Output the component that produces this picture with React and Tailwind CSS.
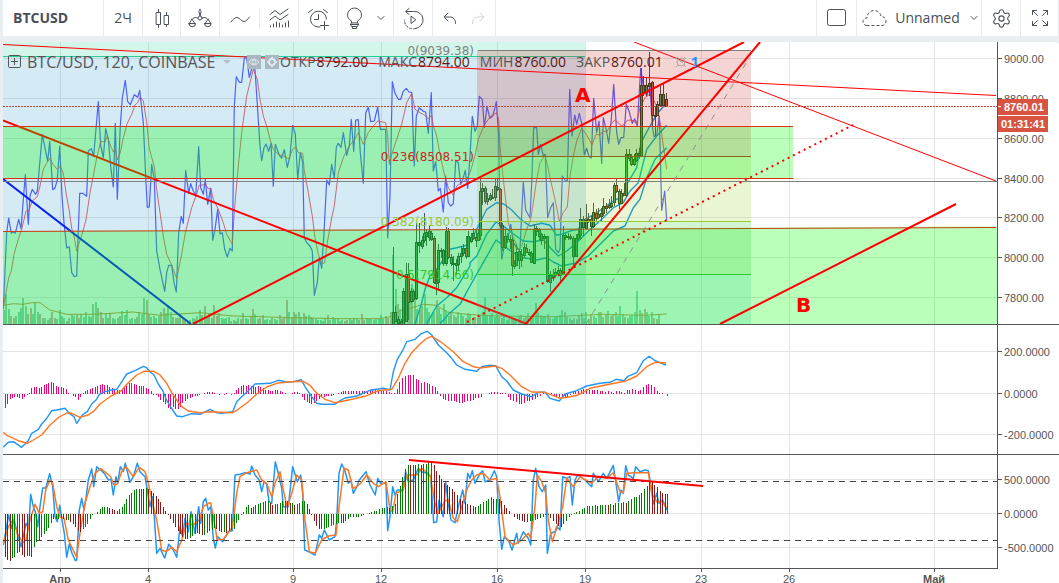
import React from 'react';
import { ChevronDown, Settings } from 'lucide-react';

// Series are stored in thirds of a pixel, split in segments: [x offset, points]
const OSC = [
  [0, '10,820 20,590 26,546 34,592 38,588 46,592 56,550 63,578 76,416 85,565 90,480 97,460 107,475 112,465 127,295 143,376 149,316 158,461 165,456 172,432 179,330 186,480 192,560 200,636 208,632 215,710 223,722 230,720 239,472 248,472 260,481 265,345 274,338 281,360 295,197 302,330 310,365 317,278 325,310 333,400 340,453 346,262 352,490 361,270 367,186 376,133 383,197 391,206 403,176 413,184 419,163 430,260 437,420 442,514 448,513 455,385 463,430 470,645 480,700 494,766 500,710 506,688 515,688 522,740 529,768 536,590 544,541 550,562 557,403 566,472 572,443 580,465 587,480 596,332 602,455 610,475 616,430 623,505 632,457 638,613 645,580 653,520 660,594 667,590 674,640 682,663 690,637 697,645 703,210 709,122 718,139 725,139 733,66 740,66 748,124 760,82 765,100 780,330'],
  [720, '65,374 72,335 78,324 86,346 93,322 100,451 106,325 118,358 125,366 133,341 142,394 150,360 158,268 166,294 173,430 181,350 188,380 193,605 200,620 210,630 217,645 223,778 232,740 238,665 245,697 252,590 260,432 268,447 275,385 283,428 289,334 295,322 303,334 310,290 320,358 328,330 334,250 341,346 347,252 355,251 361,350 370,442 377,231 385,214 392,257 403,255 413,213 421,280 437,280 443,606 450,480 457,137 465,172 475,190 482,190 490,166 499,157 507,168 515,169 523,390 529,240 538,215 550,226 557,228 565,292 574,170 580,405 587,376 595,465 601,457 610,528 617,420 625,500 632,510 640,503 647,374 655,380 662,445 670,425 676,403 683,457 690,360 697,241 705,286 712,270'],
  [1410, '28,181 37,190 43,274 51,212 60,247 68,240 75,215 79,197 86,300 90,560 95,670 105,620 115,600 122,565 130,620 143,640 150,640 160,437 167,523 180,545 185,440 191,275 200,275 205,355 212,325 220,360 226,355 233,545 242,515 250,500 257,640 265,650 270,640 277,420 285,432 292,435 299,160 306,300 314,237 320,265 328,232 335,262 343,357 350,337 357,362 364,366 371,187 380,290 387,255 395,382 400,245 408,278 416,322 424,250 431,145 440,290 446,325 453,305 461,304 469,205 477,225 487,262 494,248 502,270 512,97 520,150 530,180 540,150 547,270 552,302 560,298 568,240 575,523 584,465 590,552'],
];

const OSC_SIGNAL = [
  [0, '10,815 18,770 26,725 34,705 42,655 55,610 65,580 78,525 86,525 97,495 112,482 120,450 130,400 143,376 150,366 158,385 172,400 181,389 190,412 198,470 208,525 215,577 222,600 230,645 236,625 245,598 258,552 270,470 280,420 290,365 302,316 315,318 322,300 332,330 340,348 346,338 352,372 361,350 370,305 382,262 395,235 405,207 413,200 421,182 430,195 440,260 448,338 463,392 470,460 480,530 490,600 500,655 515,688 530,728 543,665 557,585 565,555 575,515 590,474 598,447 608,447 616,443 625,459 632,456 640,490 655,520 670,560 680,595 697,625 703,525 715,390 725,290 740,180 755,120'],
  [720, '40,100 52,130 60,190 70,240 80,270 90,310 100,340 115,355 130,360 146,368 158,340 168,333 175,350 188,352 193,405 205,470 217,540 225,605 235,655 245,683 254,680 262,620 275,545 283,510 295,410 312,360 328,330 343,312 355,290 362,305 370,325 385,290 400,270 413,255 437,260 443,300 448,385 457,350 470,310 485,265 500,200 515,172 525,220 540,230 552,236 565,248 575,238 580,270 590,300 600,355 612,410 625,455 640,478 650,450 665,440 680,430 690,410 705,360 715,310 733,267 750,243'],
  [1410, '80,230 86,250 90,330 100,430 115,560 128,600 145,640 155,630 170,580 182,550 190,500 200,430 210,380 225,358 232,385 240,425 255,490 268,555 280,530 292,513 300,420 310,360 320,315 335,277 350,297 360,315 366,326 378,295 390,297 400,285 410,288 425,262 435,251 455,270 462,265 472,253 485,252 500,262 510,215 525,185 535,178 545,180 550,190 562,215 572,270 580,330 585,365 590,400'],
];

const VOLUME_MA = [
  [0, '10,808 40,803 70,805 95,800 120,800 150,822 200,835 280,835 400,828 480,838 600,830 700,840 780,842'],
  [720, '150,845 300,848 420,848 450,842 480,825 550,805 590,808 620,828 680,835'],
  [1410, '80,840 250,842 400,835 520,838 590,834'],
];

const MA_FAST = [
  [720, '525,863 545,800 555,760 570,720 590,700 610,670 630,640 650,635 680,628 700,600 715,570'],
  [1410, '50,520 80,500 100,503 125,522 150,548 180,570 215,562 240,568 260,598 275,595 300,585 325,580 345,550 380,530 430,495 460,480 470,445 500,395 513,320 540,270 560,235 590,200'],
];
const MA_MID = [
  [720, '560,863 590,810 620,785 650,755 690,690'],
  [1410, '0,680 20,660 50,595 78,558 100,570 125,590 160,615 190,617 220,612 245,640 265,660 290,645 320,620 350,590 400,545 430,515 460,500 480,465 505,440 530,340 560,300 590,268'],
];
const MA_SLOW = [
  [720, '600,863 630,830 660,805'],
  [1410, '0,750 40,680 78,612 95,625 130,650 160,665 200,672 230,665 250,678 275,690 320,680 355,660 400,615 430,585 465,570 490,515 510,490 530,425 555,370 590,335'],
];

const MACD = [
  [0, '10,382 25,367 40,365 65,382 85,362 95,340 115,328 125,312 140,295 155,272 170,270 195,265 210,282 222,290 230,310 248,284 262,275 275,252 288,240 298,223 315,215 330,211 350,208 362,190 380,162 405,152 430,139 440,143 450,155 462,165 475,192 490,215 497,235 510,258 530,288 548,290 575,281 600,283 630,268 650,278 665,280 698,275 710,245 725,230 745,212 765,192 810,190 835,181 860,186 880,185 904,179 915,200 935,230 950,250 965,253 1005,253'],
  [1020, '0,242 15,234 50,228 90,211 130,205 150,210 160,155 172,118 190,88 200,65 225,58 245,40 262,34 275,45 295,75 320,98 335,115 350,135 375,148 410,154 425,140 450,136 467,137 485,170 500,183 520,210 545,222 575,230 595,217 615,217 630,235 658,243 675,222 710,212 740,198 780,190 810,187 828,178 852,182 862,170 890,158 910,122 928,109 945,122 978,135'],
];
const MACD_SIGNAL = [
  [0, '10,337 22,347 60,364 82,370 100,360 125,345 150,315 175,293 200,279 215,280 240,292 262,286 280,275 300,252 330,230 365,211 385,188 410,165 432,154 462,154 480,165 500,190 515,218 530,240 545,260 565,273 600,278 630,275 698,278 715,268 745,245 770,222 800,201 830,190 870,185 910,184 930,196 950,220 975,238 1005,248'],
  [1020, '0,245 40,237 80,227 115,212 155,208 175,175 195,130 215,98 240,72 260,55 275,49 300,64 340,95 370,125 400,140 420,144 465,138 485,145 510,165 545,200 575,216 615,217 660,235 690,230 715,225 750,205 800,194 855,184 890,168 920,140 945,127 978,129'],
];

const STOCH = [
  [0, '10,675 26,585 35,625 42,598 52,640 63,680 70,650 78,610 86,625 92,523 100,560 106,575 113,620 120,560 128,504 137,504 149,461 158,500 165,590 172,605 179,556 186,600 193,640 200,712 208,672 216,700 226,722 230,720 238,570 245,535 252,570 258,535 265,480 275,447 281,500 290,440 305,453 315,463 325,480 333,478 340,525 348,470 353,490 361,440 370,455 376,430 390,487 400,470 412,430 420,455 435,470 442,510 450,560 457,530 463,590 470,700 480,685 494,714 506,673 520,690 530,712 540,620 548,650 555,595 565,635 573,575 585,640 596,560 602,610 610,545 617,535 625,570 632,560 640,655 646,684 653,650 668,665 685,635 697,632 705,465 720,463 735,458 750,462 755,438 765,465 778,480 785,515 792,485 800,493 807,545 815,550 826,425 835,460 845,505 850,560 865,560 878,440 892,485 902,465 908,520 914,690 930,697 945,705 958,645 965,655 973,630 988,660 1005,650 1010,600 1017,460'],
  [1020, '5,432 14,450 25,490 33,480 40,520 50,500 58,480 78,455 90,495 106,525 113,475 122,490 138,490 143,632 150,590 158,500 165,525 172,510 188,510 197,455 205,485 220,480 235,445 245,455 260,460 272,470 281,608 290,605 297,540 310,590 317,487 325,550 333,600 345,608 355,560 368,510 375,550 383,460 390,475 397,452 405,490 420,460 428,452 435,485 450,480 463,452 470,470 477,600 485,688 493,650 507,665 516,690 530,640 535,670 550,635 565,655 572,675 580,480 587,445 597,500 607,515 617,495 622,700 632,640 645,635 650,620 660,630 668,470 680,475 690,470 697,555 705,480 713,465 735,480 755,500 760,460 775,485 790,460 800,475 820,436 828,490 836,545 843,510 850,520 857,437 865,465 880,475 887,440 900,455 915,450 925,452 932,490 940,552 950,520 957,550 968,540 980,570'],
];
const STOCH_SIGNAL = [
  [0, '10,672 25,620 40,598 52,640 68,668 78,660 90,600 105,553 118,580 128,575 137,510 150,480 158,490 170,560 180,590 192,595 205,660 230,712 240,640 255,550 270,500 285,460 302,446 320,460 332,470 342,495 352,492 365,455 378,440 400,470 418,442 435,455 445,490 458,550 470,600 485,690 498,695 515,682 530,695 545,660 560,610 580,615 598,600 610,560 625,550 632,548 640,590 652,660 670,658 697,622 710,520 720,470 740,458 770,450 785,480 800,490 815,530 825,490 840,455 852,520 862,562 875,520 890,465 905,480 915,600 928,695 945,700 965,660 985,648 1008,645 1018,555'],
  [1020, '12,445 25,450 38,505 50,500 62,490 80,465 100,490 115,500 138,485 150,570 158,575 168,520 190,510 200,465 230,465 245,445 270,465 285,550 295,580 315,542 325,540 340,595 352,605 365,560 380,510 395,480 410,465 430,460 450,480 470,475 480,530 495,650 520,675 545,660 565,640 572,655 585,560 592,465 605,485 617,520 625,600 637,665 655,610 668,560 680,475 700,500 720,470 755,490 775,470 800,475 820,458 840,515 850,518 860,460 885,458 925,458 935,520 950,545 968,545 980,565'],
];

const VOLUME = [14,30,15,8,6,8,12,16,26,18,10,16,10,22,12,10,6,6,4,6,12,6,5,14,8,6,3,6,9,8,10,6,10,7,12,8,7,20,22,16,12,6,10,6,11,6,5,6,8,13,9,14,5,6,5,7,12,10,26,24,10,7,8,6,8,12,16,11,19,12,7,6,6,10,6,5,3,4,6,5,8,14,9,18,7,10,6,19,8,11,6,5,6,7,3,4,3,6,5,11,6,5,7,15,10,5,6,9,4,5,4,6,5,4,9,5,6,24,12,6,12,10,12,7,11,8,9,7,6,5,4,4,3,6,9,4,7,5,6,3,4,3,4,6,4,6,5,4,10,4,6,5,6,4,5,6,9,5,8,6,12,69,35,20,15,18,26,22,30,40,25,15,14,18,30,16,12,10,12,24,16,10,20,14,8,12,9,7,12,10,8,6,11,9,6,7,6,9,12,27,8,9,11,7,10,7,6,8,4,5,7,4,6,8,9,6,8,11,5,8,21,12,9,7,8,10,6,5,7,8,9,14,12,7,6,4,6,5,8,11,6,12,5,10,8,6,12,12,7,9,13,8,9,12,8,18,10,7,6,8,9,12,33,14,11,15,12,8,12,6,5,10];

// [x, open, close, high, low]
const CANDLES = [
  [1178,863,828,632,863],[1186,828,855,810,858],[1194,863,850,840,863],[1202,855,863,850,863],[1210,863,765,755,863],[1217,855,715,680,858],[1224,713,797,680,850],[1232,766,797,755,800],[1240,790,766,760,800],[1249,788,619,560,792],[1257,619,627,560,650],[1265,629,612,600,640],[1272,612,592,530,620],[1279,600,588,580,630],[1286,586,605,570,615],[1294,590,608,585,615],[1301,605,738,600,745],[1308,735,740,700,778],[1315,740,643,625,765],[1323,643,645,635,665],[1330,643,683,640,690],[1337,683,586,572,690],[1345,586,665,575,668],[1353,662,680,655,690],[1360,682,686,660,735],[1368,685,680,668,715],[1375,684,660,650,700],[1383,662,652,630,680],[1390,652,637,625,660],[1398,637,660,600,670],[1405,660,600,585,662],[1413,602,614,590,620],[1420,605,590,575,612],[1428,602,612,578,632],[1435,612,590,580,615],[1439,598,465,430,612],
  [1447,465,457,440,505],[1454,457,497,450,505],[1461,495,485,470,505],[1469,490,478,470,495],[1476,483,485,460,490],[1484,484,450,430,495],[1491,453,460,428,465],[1499,460,568,455,575],[1507,568,634,560,645],[1514,634,600,580,640],[1522,600,610,590,620],[1529,608,613,598,640],[1535,612,688,605,718],[1542,690,680,672,700],[1549,686,647,625,690],[1557,645,672,640,700],[1564,672,655,640,695],[1572,655,632,620,665],[1579,635,648,625,650],[1587,648,655,640,660],[1594,652,680,645,682],[1601,680,578,565,682],[1609,577,585,570,600],[1617,580,600,575,610],[1624,595,612,590,625],[1632,605,600,595,640],[1642,601,736,600,740],[1650,738,716,705,768],[1658,722,714,700,735],[1666,718,708,695,725],[1674,714,703,690,720],[1681,703,718,695,735],[1688,715,597,570,718],[1695,597,603,590,610],[1703,604,600,590,610],[1710,600,607,593,612],[1719,606,661,600,690],[1727,661,606,595,665],[1734,607,595,580,612],[1741,597,550,515,610],[1749,550,574,540,600],[1757,575,552,505,580],[1765,549,556,530,560],[1772,550,570,540,600],[1780,570,528,500,575],[1788,530,545,520,555],[1795,545,535,515,548],[1803,540,530,515,556],[1810,532,511,485,540],[1818,510,516,500,530],[1826,514,508,490,520],[1834,510,500,480,515],[1842,500,448,440,510],[1848,448,465,428,470],[1856,465,500,460,520],[1864,500,470,460,505],[1871,470,475,440,480],[1878,476,354,340,485],[1886,354,365,340,375],[1894,362,382,355,392],[1901,384,370,355,390],[1909,372,352,340,378],[1916,352,358,335,368],[1923,360,148,97,363],[1930,148,170,120,180],[1938,170,148,125,180],[1948,148,140,47,180],[1957,138,238,135,270],[1964,236,240,210,300],[1972,238,205,195,240],[1981,208,175,150,210],[1989,175,207,145,212],[1997,190,210,170,213],
];

const MACD_BARS = [
  [14, 1022, [-43,-30,-15,-12,-10,-10,-12,-16,-10,-2,3,17,20,20,17,22,28,31,33,35,32,25,20,20,18,14,4,-1,-5,-10,-18,-8,3,8,11,14,17,21,25,26,29,28,26,22,18,16,13,12,16,22,28,32,32,30,27,25,23,23,18,14,8,-2,-4,-10,-18,-24,-30,-42,-46,-40,-46,-46,-40,-28,-22,-14,-12,-8,-6,-5,-3,-1,3,5,6,7,3,1,-2,1,-3,2,-1,-2,2,12,18,24,26,24,28,24,26,20,25,22,18,13,12,10,8,12,12,10,6,4,-1,0,4,5,5,2,-10,-18,-24,-28,-30,-26,-20,-14,-10,-9,-7,-5,-6,-3,1,4,6]],
  [1028, 2002, [8,8,8,8,8,8,8,8,8,9,9,11,12,11,9,10,8,5,2,2,16,35,47,55,58,58,57,46,42,34,35,32,30,24,20,8,-5,-16,-18,-20,-22,-22,-25,-28,-26,-25,-22,-20,-18,-13,-12,-8,0,0,4,6,5,5,2,2,2,-8,-18,-20,-25,-30,-30,-28,-22,-22,-18,-15,-10,-6,3,3,3,3,-5,-8,-10,-12,-10,-10,-4,6,8,10,12,14,14,12,12,12,12,9,8,7,8,6,4,8,8,5,2,12,13,15,13,10,12,22,26,29,27,20,8,4,2,-1,-6]],
];
const STOCH_BARS = [
  [14, 1022, [-128,-138,-140,-132,-128,-116,-115,-122,-128,-126,-126,-128,-98,-85,-80,-70,-60,-52,-42,-28,-16,-14,-14,-12,-14,-18,-18,-24,-30,-38,-50,-54,-46,-38,-30,-16,-4,0,6,14,20,20,22,18,14,12,10,14,20,30,44,56,62,72,74,74,76,74,77,75,70,62,54,46,36,20,8,-4,-14,-28,-40,-50,-60,-70,-74,-76,-72,-66,-60,-58,-60,-62,-62,-58,-52,-48,-42,-46,-52,-54,-54,-56,-50,-48,-46,-26,-18,-4,6,20,26,18,22,26,30,32,36,38,38,34,28,30,30,34,38,38,38,32,32,28,30,32,38,38,30,14,-4,-20,-36,-46,-46,-46,-42,-38,-36,-32,-30,-28,-26]],
  [1028, 2002, [-26,-22,-16,-10,-8,-8,-8,-6,-3,-1,2,5,8,10,14,18,18,20,18,24,30,60,85,110,136,148,146,148,146,150,148,150,150,155,155,146,130,118,104,94,88,82,74,66,56,46,40,36,30,26,24,22,24,30,36,40,46,50,46,46,44,38,28,18,8,0,-8,-14,-18,-22,-24,-24,-22,-20,-18,-14,-12,-10,-4,-2,-12,-22,-30,-36,-40,-30,-20,-10,-4,2,6,10,14,18,24,24,24,26,24,26,26,28,26,30,28,32,34,34,36,34,40,44,50,52,58,62,76,84,100,96,88,80,70,62,60,60]],
];

const DAYS = [
  { x: 57, label: 'Апр', bold: true },
  { x: 145, label: '4' },
  { x: 290, label: '9' },
  { x: 378, label: '12' },
  { x: 494, label: '16' },
  { x: 582, label: '19' },
  { x: 698, label: '23' },
  { x: 786, label: '26' },
  { x: 931, label: 'Май', bold: true },
];

const FIB = [
  { y: 8, next: 114, line: '#808080', fill: '#cc2828', label: '0(9039.38)' },
  { y: 114, next: 179, line: '#cc2828', fill: '#95cc28', label: '0.236(8508.51)' },
  { y: 179, next: 232, line: '#95cc28', fill: '#28cc28', label: '0.382(8180.09)' },
  { y: 232, next: 282, line: '#28cc28', fill: '#28cc95', label: '0.5(7914.66)' },
];

function toPoints(segments, top) {
  return segments
    .flatMap(([offset, pts]) =>
      pts.split(' ').map((p) => {
        const [x, y] = p.split(',').map(Number);
        return `${((x + offset) / 3 - 3).toFixed(1)},${(y / 3 - top).toFixed(1)}`;
      })
    )
    .join(' ');
}

function Line({ data, top, ...props }) {
  return <polyline points={toPoints(data, top)} fill="none" strokeLinejoin="round" {...props} />;
}

function Grid({ rows }) {
  return (
    <g stroke="#e4e4e4" shapeRendering="crispEdges">
      {DAYS.map((d) => <line key={d.x} x1={d.x + 0.5} x2={d.x + 0.5} y1="0" y2="100%" />)}
      {rows.map((y) => <line key={y} x1="0" x2="100%" y1={y + 0.5} y2={y + 0.5} />)}
    </g>
  );
}

function Bars({ groups, zero, color }) {
  return (
    <g shapeRendering="crispEdges">
      {groups.map(([from, to, values]) =>
        values.map((v, i) => {
          const x = Math.round((from + ((to - from) * i) / (values.length - 1)) / 3 - 3);
          const h = Math.round(Math.abs(v) / 3);
          return <rect key={`${from}-${i}`} x={x} y={v > 0 ? zero - h : zero} width="1" height={h} fill={color(v, values[i - 1])} />;
        })
      )}
    </g>
  );
}

function Axis({ labels, children }) {
  return (
    <div className="w-[62px] shrink-0 border-l border-[#555555]">
      <svg className="block h-full w-full font-['Liberation_Sans',sans-serif] text-[11px]" fill="#555555">
        {labels.map(([y, text]) => (
          <g key={text}>
            <line x1="0" x2="4" y1={y + 0.5} y2={y + 0.5} stroke="#555555" />
            <text x="6" y={y + 5}>{text}</text>
          </g>
        ))}
        {children}
      </svg>
    </div>
  );
}

function PricePane() {
  return (
    <section className="relative flex h-[283px] border-b border-[#555555]">
      <svg className="block h-full min-w-0 flex-1">
        <Grid rows={[16, 56, 96, 136, 175, 215, 255]} />

        <g shapeRendering="crispEdges" opacity="0.55">
          {VOLUME.map((v, i) => (
            <rect key={i} x={Math.round(i * 2.417)} y={282 - v} width="2" height={v} fill={(i * 7 + v * 3) % 5 < 2 ? '#b0685a' : '#3aa86c'} />
          ))}
        </g>
        <Line data={VOLUME_MA} top={6} stroke="#c98a3a" />

        <Line data={OSC} top={6} stroke="#3a3aff" strokeWidth="1.2" opacity="0.85" />
        <Line data={OSC_SIGNAL} top={6} stroke="#e8434a" opacity="0.85" />
        <g stroke="#0c90e0" strokeWidth="1.4">
          <Line data={MA_FAST} top={6} />
          <Line data={MA_MID} top={6} />
          <Line data={MA_SLOW} top={6} />
        </g>

        <g shapeRendering="crispEdges">
          {CANDLES.map(([x, o, c, h, l]) => {
            const cx = Math.round(x / 3 - 3);
            const top = Math.round(Math.min(o, c) / 3 - 6);
            const height = Math.max(1, Math.round(Math.abs(o - c) / 3));
            return (
              <g key={x}>
                <rect x={cx} y={Math.round(h / 3 - 6)} width="1" height={Math.round((l - h) / 3)} fill="#4a4a42" />
                <rect x={cx - 0.5} y={top + 0.5} width="2" height={height} fill={c < o ? '#4f9a58' : '#e8503c'} stroke="#23401f" strokeWidth="1" />
              </g>
            );
          })}
        </g>

        <line x1="0" y1="137" x2="188" y2="282" stroke="#0000ff" strokeWidth="2" />
        <rect x="0" y="0" width="582" height="14" fill="#28cc95" opacity="0.2" />
        <rect x="0" y="14" width="582" height="268" fill="#2895cc" opacity="0.2" />
        <line x1="0" y1="14.5" x2="582" y2="14.5" stroke="#28cc95" />
        <polygon points="0,189 3000,175 3000,282 0,282" fill="#00ff00" opacity="0.27" />
        <polyline points="0,189.5 993,185.5" stroke="#d03a10" fill="none" />
        <line x1="0" y1="78.5" x2="524" y2="282" stroke="#ff0000" strokeWidth="2" />

        {FIB.map((f) => (
          <g key={f.label} shapeRendering="crispEdges">
            <rect x="474" y={f.y} width="274" height={f.next - f.y} fill={f.fill} opacity="0.2" />
            <line x1="475" x2="748" y1={f.y + 0.5} y2={f.y + 0.5} stroke={f.line} />
          </g>
        ))}

        <rect x="0" y="84" width="790" height="53" fill="#00ff00" opacity="0.27" />
        <g stroke="#e03010" shapeRendering="crispEdges">
          <line x1="0" x2="790" y1="84.5" y2="84.5" />
          <line x1="0" x2="790" y1="136.5" y2="136.5" />
        </g>
        <line x1="0" x2="100%" y1="139.5" y2="139.5" stroke="#808080" />
        <line x1="0" x2="100%" y1="64.5" y2="64.5" stroke="#c84434" strokeDasharray="2 1" shapeRendering="crispEdges" />

        <line x1="583" y1="282" x2="745" y2="18" stroke="#909090" strokeDasharray="6 6" />
        <g stroke="#ff0000">
          <line x1="0" y1="2.5" x2="993" y2="53.5" />
          <line x1="631" y1="0" x2="993" y2="139" />
        </g>
        <g stroke="#ff0000" strokeWidth="2">
          <line x1="190" y1="282" x2="741" y2="0" />
          <line x1="523" y1="282" x2="757" y2="0" />
          <line x1="717" y1="282" x2="953" y2="162" />
          <line x1="464" y1="280" x2="850" y2="83" strokeDasharray="2 4" />
        </g>

        <g className="font-['DejaVu_Sans',sans-serif] text-[12px]" textAnchor="end">
          {FIB.map((f) => <text key={f.label} x="471" y={f.y + 5} fill={f.line}>{f.label}</text>)}
        </g>
        <g className="font-['DejaVu_Sans',sans-serif] text-[20px] font-bold" fill="#ff0000">
          <text x="572" y="60">A</text>
          <text x="793" y="270">B</text>
        </g>
      </svg>

      <Axis labels={[[16, '9000.00'], [56, '8800.00'], [96, '8600.00'], [136, '8400.00'], [175, '8200.00'], [215, '8000.00'], [255, '7800.00']]}>
        <g className="font-bold">
          <rect x="0" y="57" width="50" height="16" fill="#d75442" />
          <rect x="0" y="74" width="50" height="16" fill="#d75442" />
          <line x1="0" x2="3" y1="64.5" y2="64.5" stroke="#ffffff" />
          <text x="6" y="69" fill="#ffffff">8760.01</text>
          <text x="3" y="86" fill="#ffffff">01:31:41</text>
        </g>
      </Axis>

      <Legend />
    </section>
  );
}

const OHLC = [
  ['ОТКР', '8792.00'],
  ['МАКС', '8794.00'],
  ['МИН', '8760.00'],
  ['ЗАКР', '8760.01'],
];

function Legend() {
  return (
    <div className="absolute left-[5px] top-[10px] flex h-5 items-center whitespace-nowrap font-['Open_Sans',sans-serif] text-sm text-[#555555]">
      <svg className="mr-[5px] h-[14px] w-[14px]" fill="none" stroke="#555555">
        <rect x="0.5" y="0.5" width="12" height="12" rx="1" />
        <path d="M3 6.5h7M6.5 3v7" />
      </svg>
      <span className="w-[196px] text-base">BTC/USD, 120, COINBASE</span>
      <svg className="mr-4 h-1 w-2" fill="#b5bfc8"><path d="M0 0h8l-4 4z" /></svg>
      <div className="mr-px flex gap-1">
        <svg className="h-[14px] w-[14px]" fill="none" stroke="#dfe6ea">
          <rect width="14" height="14" fill="#a9b7c0" stroke="none" />
          <path d="M2 7q5-6 10 0q-5 6-10 0z" /><circle cx="7" cy="7" r="2" />
        </svg>
        <svg className="h-[14px] w-[14px]" fill="none" stroke="#dfe6ea" strokeWidth="2">
          <rect width="14" height="14" fill="#a9b7c0" stroke="none" />
          <circle cx="7" cy="7" r="3" /><path d="M7 2v2M7 10v2M2 7h2M10 7h2" />
        </svg>
      </div>
      <dl className="flex gap-[10px]">
        {OHLC.map(([name, value]) => (
          <div key={name} className="flex gap-px">
            <dt>{name}</dt>
            <dd className="text-[#5b1a13]">{value}</dd>
          </div>
        ))}
      </dl>
      <svg className="ml-3 mr-1 h-3 w-3" fill="none" stroke="#b0a0a0">
        <circle cx="6" cy="6" r="4" /><path d="M1 3l2-2M11 3l-2-2M1 11l2-2M11 11l-2-2M4 4l2 2h2" />
      </svg>
      <span className="font-bold text-[#2196f3]">1</span>
    </div>
  );
}

function MacdPane() {
  return (
    <section className="flex h-[130px] border-b border-[#555555]">
      <svg className="block h-full min-w-0 flex-1">
        <Grid rows={[26, 68, 109]} />
        <Bars groups={MACD_BARS} zero={69} color={() => '#f5006e'} />
        <Line data={MACD} top={5} stroke="#2196f3" strokeWidth="1.4" />
        <Line data={MACD_SIGNAL} top={5} stroke="#ff7722" strokeWidth="1.4" />
      </svg>
      <Axis labels={[[26, '200.0000'], [68, '0.0000'], [109, '-200.0000']]} />
    </section>
  );
}

function StochPane() {
  return (
    <section className="flex h-[114px]">
      <svg className="block h-full min-w-0 flex-1 border-b border-[#555555]">
        <Grid rows={[24, 58, 92]} />
        <Line data={STOCH} top={135} stroke="#2196f3" strokeWidth="1.5" />
        <Line data={STOCH_SIGNAL} top={135} stroke="#ff7722" strokeWidth="1.5" />
        <Bars groups={STOCH_BARS} zero={59} color={(v, prev = 0) => (v >= prev ? '#008000' : '#8b1a1a')} />
        <g stroke="#444444" strokeDasharray="6 5" shapeRendering="crispEdges">
          <line x1="0" x2="100%" y1="26.5" y2="26.5" />
          <line x1="0" x2="100%" y1="85.5" y2="85.5" />
        </g>
        <line x1="406" y1="5" x2="700" y2="31" stroke="#ff0000" strokeWidth="2" />
      </svg>
      <Axis labels={[[24, '500.0000'], [58, '0.0000'], [92, '-500.0000']]} />
    </section>
  );
}

function TimeAxis() {
  return (
    <svg className="block h-[14px] w-full font-['Liberation_Sans',sans-serif] text-[11px]" fill="#555555" textAnchor="middle">
      {DAYS.map((d) => (
        <g key={d.label}>
          <line x1={d.x + 0.5} x2={d.x + 0.5} y1="0" y2="3" stroke="#555555" />
          <text x={d.x} y="14" className={d.bold ? 'font-bold' : ''}>{d.label}</text>
        </g>
      ))}
    </svg>
  );
}

function Tool({ label, className, children }) {
  return (
    <button type="button" aria-label={label} className={`flex h-full shrink-0 items-center justify-center border-[#e8ebee] ${className}`}>
      {children}
    </button>
  );
}

function Icon({ children }) {
  return (
    <svg width="24" height="24" fill="none" stroke="#4a505c" strokeLinecap="round" strokeLinejoin="round">
      {children}
    </svg>
  );
}

function Toolbar() {
  return (
    <header className="flex h-9 items-center bg-white font-['Open_Sans',sans-serif] text-sm text-[#4a4f58]">
      <button type="button" className="h-full w-[101px] shrink-0 border-r border-[#e8ebee] pl-[10px] text-left font-bold">BTCUSD</button>
      <Tool className="w-[39px] border-r">2Ч</Tool>
      <Tool label="Candles" className="w-[38px] border-r">
        <Icon>
          <path d="M6.5 6.5h4v12h-4zM8.5 3.5v3M8.5 18.5v3M14.5 9.5h4v9h-4zM16.5 6.5v3M16.5 18.5v2" />
        </Icon>
      </Tool>
      <Tool label="Compare" className="w-[39px] border-r">
        <Icon>
          <path d="M12 3.500a1.500 2 0 0 0-1 2l1 4.500 1-4.500a1.500 2 0 0 0-1-2zM5 12.500c1-1 3-1.500 5-.5M19 12.500c-1-1-3-1.500-5-.5M4 13l-3 5M4 13l3 5M20 13l-3 5M20 13l3 5M1 17.500h6.500a3 3 0 0 1-6.500 0zM16.500 17.500h6.500a3 3 0 0 1-6.500 0z" />
          <circle cx="12" cy="12" r="2" />
        </Icon>
      </Tool>
      <Tool label="Line tools" className="w-[39px]">
        <Icon><path d="M3 16c2-3 4-4.500 6-4.500 3 0 4 4 7 4 2 0 3.500-2 5.500-4.500" /></Icon>
      </Tool>
      <span className="h-5 w-px bg-[#e8ebee]" />
      <Tool label="Indicators" className="w-[39px] border-r">
        <Icon>
          <path d="M3 8.500l5-4 5 4 8-5.500M3 14l5-4 5 4 8-5.500" />
          <path d="M3.500 21v-1M6.500 21v-3M9.500 21v-5M12.500 21v-4M15.500 21v-2M18.500 21v-4M21.500 21v-6" />
        </Icon>
      </Tool>
      <Tool label="Alert" className="w-[39px] border-r">
        <Icon>
          <path d="M20.500 13a8 8 0 1 0-6.500 8M12.500 8.500v5h-4M2.500 6.500l4-3M17.500 3.500l4 3M18.500 15.500v8M14.500 19.500h8" />
        </Icon>
      </Tool>
      <Tool label="Ideas" className="w-[56px] gap-2 border-r pr-px">
        <Icon>
          <path d="M8.500 16.500v-1.500c-3-1.500-4-4-4-6a7 7 0 0 1 14 0c0 2-1 4.500-4 6v1.500zM7.500 18.500h8M8.500 16.500l-1 2 1 2h6l1-2-1-2M9.500 20.500v2h4v-2" />
        </Icon>
        <ChevronDown size={12} strokeWidth={2} />
      </Tool>
      <Tool label="Replay" className="w-[39px] border-r">
        <Icon>
          <path d="M5.500 5.500h7a8.500 8.500 0 0 1 2 17M8 2.500l-3.500 3 3.500 3M10 10.500v7l4.500-3.500z" />
          <path d="M14.500 22.500a8.500 8.500 0 0 1-11-8.500" strokeDasharray="2 2" />
        </Icon>
      </Tool>
      <div className="flex h-full w-[63px] items-center justify-center gap-[14px] border-r border-[#e8ebee]">
        <button type="button" aria-label="Undo">
          <svg width="14" height="13" fill="none" stroke="#4a505c" strokeLinecap="round"><path d="M5 1L1 5l4 4M1.500 5h5c4 0 6 2 6 6.500" /></svg>
        </button>
        <button type="button" aria-label="Redo">
          <svg width="14" height="13" fill="none" stroke="#d0d3d7" strokeLinecap="round"><path d="M9 1l4 4-4 4M12.500 5h-5c-4 0-6 2-6 6.500" /></svg>
        </button>
      </div>

      <div className="ml-auto flex h-full">
        <Tool label="Layout" className="w-[40px] border-l">
          <svg width="20" height="20" fill="none" stroke="#4a505c"><rect x="0.5" y="1.5" width="18" height="16" rx="2" /></svg>
        </Tool>
        <Tool className="w-[125px] gap-2 border-l pl-1">
          <svg width="25" height="20" fill="none" stroke="#4a505c" strokeDasharray="3 2">
            <path d="M5 17.500c-3 0-4-2-4-4s1.500-3.500 4-3.500c0-4 3-7.500 7-7.500s7 3 7 6c3 0 5 2 5 4.500s-1.500 4.500-4 4.500z" />
          </svg>
          <span>Unnamed</span>
          <ChevronDown size={12} strokeWidth={2} />
        </Tool>
        <Tool label="Settings" className="w-[39px] border-l">
          <Settings size={21} strokeWidth={1.25} />
        </Tool>
        <Tool label="Fullscreen" className="w-[39px] border-x">
          <Icon>
            <path d="M4.500 8.500v-4h4M4.500 4.500l5 5M15.500 4.500h4v4M19.500 4.500l-5 5M4.500 15.500v4h4M4.500 19.500l5-5M15.500 19.500h4v-4M19.500 19.500l-5-5" />
          </Icon>
        </Tool>
      </div>
    </header>
  );
}

export default function App() {
  return (
    <div className="flex flex-col gap-[6px] bg-[#ebeef1] pl-[3px]">
      <Toolbar />
      <main className="overflow-hidden rounded-tr bg-white">
        <PricePane />
        <MacdPane />
        <StochPane />
        <TimeAxis />
      </main>
    </div>
  );
}
